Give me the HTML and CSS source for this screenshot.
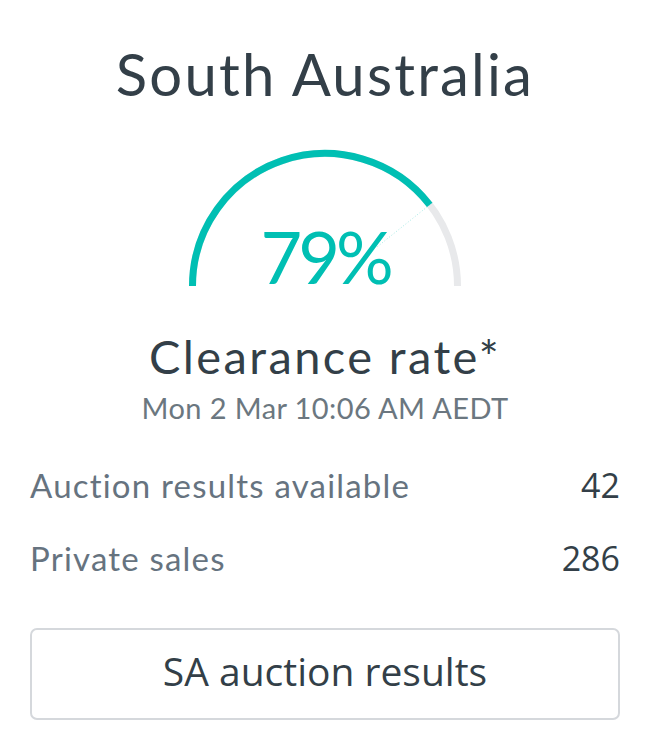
FILE: index.html
```html
<!DOCTYPE html>
<html lang="en">
<head>
    <meta charset="UTF-8">
    <meta name="viewport" content="width=device-width, initial-scale=1.0">
    <title>Clearance rate</title>
<link rel="stylesheet" href="styles.css">
</head>
<body>
    <div class="card">
        <h1 class="state">South Australia</h1>

        <div class="gauge">
            <svg class="gauge-arc" width="280" height="142" viewBox="0 0 280 142">
                <path d="M 7.5 138 A 132.5 132.5 0 0 1 272.5 138" fill="none" stroke="#e8e9eb" stroke-width="7"/>
                <path d="M 7.5 138 A 132.5 132.5 0 0 1 244.7 56.8" fill="none" stroke="#00bfb3" stroke-width="7"/>
                <line x1="244.7" y1="56.8" x2="192" y2="99" stroke="#00bfb3" stroke-opacity="0.35" stroke-width="1" stroke-dasharray="1 2"/>
            </svg>
            <div class="gauge-value">79%</div>
        </div>

        <div class="label">Clearance rate*</div>
        <div class="date">Mon 2 Mar 10:06 AM AEDT</div>

        <div class="stats">
            <div class="stat-row">
                <span class="stat-name">Auction results available</span>
                <span class="stat-num">42</span>
            </div>
            <div class="stat-row">
                <span class="stat-name">Private sales</span>
                <span class="stat-num">286</span>
            </div>
        </div>

        <button class="results-btn" type="button">SA auction results</button>
    </div>
</body>
</html>
```

FILE: styles.css
```css
body {
    margin: 0;
    background: #fff;
    font-family: Lato, "Open Sans", sans-serif;
    color: #333f48;
}

/* whole widget */
.card {
    width: 590px;
    padding: 0 26px 0 30px;
    text-align: center;
}

.state {
    margin: 0;
    padding-top: 38px;
    font-size: 58px;
    font-weight: 400;
    line-height: 72px;
    letter-spacing: 2.2px;
    color: #333f48;
}

/* gauge */
.gauge {
    position: relative;
    width: 280px;
    height: 142px;
    margin: 38px auto 0;
}

.gauge-arc {
    display: block;
}

.gauge-value {
    position: absolute;
    left: 0;
    right: 0;
    bottom: -6px;
    font-size: 72px;
    font-weight: 400;
    line-height: 80px;
    letter-spacing: -4px;
    color: #00bfb3;
}

.label {
    margin-top: 38px;
    font-size: 47px;
    font-weight: 400;
    line-height: 56px;
    letter-spacing: 2.4px;
}

.date {
    margin-top: 6px;
    font-size: 29px;
    font-weight: 400;
    line-height: 36px;
    letter-spacing: 0.4px;
    color: #6b7780;
}

/* stats rows */
.stats {
    margin-top: 37px;
}

.stat-row {
    display: flex;
    justify-content: space-between;
    align-items: baseline;
    height: 73px;
    line-height: 44px;
}

.stat-name {
    font-size: 33px;
    font-weight: 400;
    letter-spacing: 1.2px;
    color: #66737f;
}

.stat-num {
    font-family: "Open Sans", sans-serif;
    font-size: 34px;
    color: #333f48;
}

.results-btn {
    display: block;
    width: 100%;
    height: 92px;
    margin-top: 19px;
    padding-bottom: 8px;
    border: 2px solid #d5d8dc;
    border-radius: 7px;
    background: #fff;
    font-family: "Open Sans", sans-serif;
    font-size: 39px;
    color: #333f48;
}
```
